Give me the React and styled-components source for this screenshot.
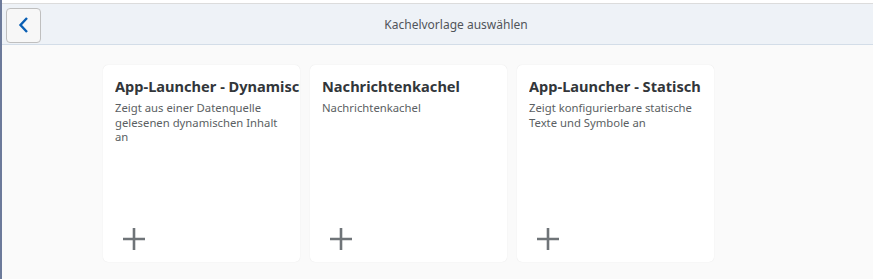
import React from 'react';
import styled, { createGlobalStyle } from 'styled-components';

const GlobalStyle = createGlobalStyle`
  html, body {
    margin: 0;
    padding: 0;
    background: #fafafa;
    font-family: "Noto Sans", "Open Sans", Arial, sans-serif;
  }
`;

const tiles = [
  {
    title: 'App-Launcher - Dynamisch',
    text: 'Zeigt aus einer Datenquelle gelesenen dynamischen Inhalt an',
  },
  { title: 'Nachrichtenkachel', text: 'Nachrichtenkachel' },
  {
    title: 'App-Launcher - Statisch',
    text: 'Zeigt konfigurierbare statische Texte und Symbole an',
  },
];

const App = () => {
  return (
    <React.Fragment>
      <GlobalStyle />
      <Page>
        <TopLine />
        <Header>
          <BackButton aria-label="Zurück">
            <svg width="14" height="18" viewBox="0 0 14 18">
              <path d="M10 2 L3.5 9 L10 16" fill="none" stroke="#0a5fb4" strokeWidth="2.4" />
            </svg>
          </BackButton>
          <Title>Kachelvorlage auswählen</Title>
        </Header>

        <Content>
          {tiles.map((tile) => (
            <Tile key={tile.title}>
              <TileTitle>{tile.title}</TileTitle>
              <TileText>{tile.text}</TileText>
              <AddIcon>
                <svg width="22" height="22" viewBox="0 0 22 22">
                  <path d="M11 0 V22 M0 11 H22" stroke="#6f7478" strokeWidth="2.6" />
                </svg>
              </AddIcon>
            </Tile>
          ))}
        </Content>
      </Page>
    </React.Fragment>
  );
};

export default App;

const Page = styled.div`
  height: 279px;
  border-left: 2px solid #6c7a9a;
  background: #fafafa;
  box-sizing: border-box;
  overflow: hidden;
`;

const TopLine = styled.div`
  height: 3px;
  background: #ffffff;
  border-bottom: 1px solid #dcdcdc;
`;

const Header = styled.div`
  display: flex;
  align-items: center;
  height: 40px;
  padding-left: 4px;
  background: #eef2f7;
  border-bottom: 1px solid #d3dde8;
`;

const BackButton = styled.button`
  display: flex;
  align-items: center;
  justify-content: center;
  width: 35px;
  height: 35px;
  padding: 0;
  margin-top: 2px;
  background: #f7f7f7;
  border: 1px solid #bfbfbf;
  border-radius: 4px;
`;

const Title = styled.div`
  flex: 1;
  text-align: center;
  font-size: 12px;
  color: #51555a;
  padding-right: 2px;
`;

const Content = styled.div`
  display: grid;
  grid-template-columns: repeat(3, 197px);
  gap: 10px;
  padding: 20px 0 0 101px;
`;

const Tile = styled.div`
  display: flex;
  flex-direction: column;
  height: 197px;
  padding: 11px 12px 0 12px;
  box-sizing: border-box;
  background: #ffffff;
  border-radius: 5px;
  box-shadow: 0 0 1px rgba(0, 0, 0, 0.12);
  overflow: hidden;
`;

const TileTitle = styled.div`
  font-size: 14.6px;
  font-weight: 700;
  color: #32363a;
  white-space: nowrap;
  line-height: 20px;
  margin-right: -12px;
  overflow: hidden;
`;

const TileText = styled.div`
  margin-top: 5px;
  margin-right: -4px;
  font-size: 11.3px;
  line-height: 14.5px;
  color: #5b5f63;
`;

const AddIcon = styled.div`
  margin-top: auto;
  margin-bottom: 12px;
  margin-left: 8px;
  height: 22px;
`;
